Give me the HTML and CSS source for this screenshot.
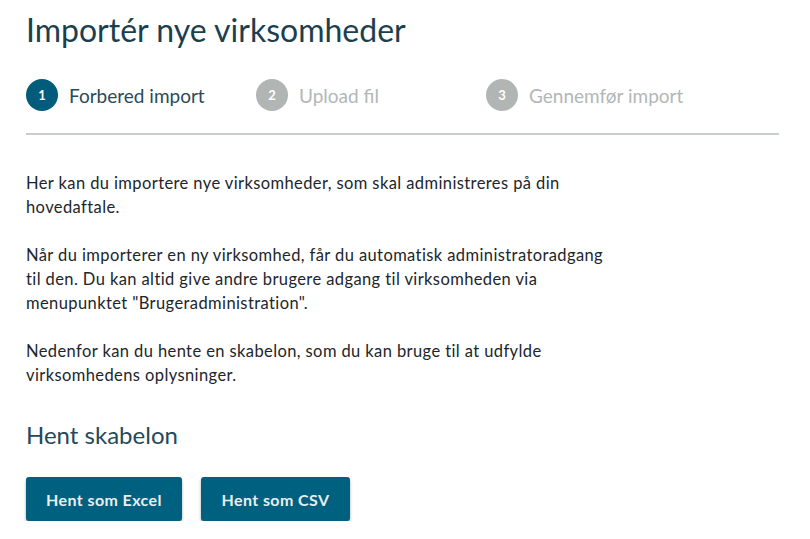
FILE: index.html
```html
<!DOCTYPE html>
<html lang="da">
<head>
<meta charset="utf-8">
<title>Importér nye virksomheder</title>
<link rel="stylesheet" href="styles.css">
</head>
<body>
<main class="page">
  <h1 class="title">Importér nye virksomheder</h1>
  <ol class="steps">
    <li class="step active"><span class="num">1</span><span class="label">Forbered import</span></li>
    <li class="step"><span class="num">2</span><span class="label">Upload fil</span></li>
    <li class="step"><span class="num">3</span><span class="label">Gennemfør import</span></li>
  </ol>
  <section class="content">
    <p>Her kan du importere nye virksomheder, som skal administreres på din<br>hovedaftale.</p>
    <p>Når du importerer en ny virksomhed, får du automatisk administratoradgang<br>til den. Du kan altid give andre brugere adgang til virksomheden via<br>menupunktet "Brugeradministration".</p>
    <p>Nedenfor kan du hente en skabelon, som du kan bruge til at udfylde<br>virksomhedens oplysninger.</p>
    <h2 class="subtitle">Hent skabelon</h2>
    <div class="buttons">
      <button class="btn excel">Hent som Excel</button>
      <button class="btn csv">Hent som CSV</button>
    </div>
  </section>
</main>
</body>
</html>
```
FILE: styles.css
```css
* { box-sizing: border-box; }
html, body { margin: 0; padding: 0; background: #fff; }
body { font-family: Lato, "Open Sans", sans-serif; color: #1f2d33; }
.page { padding: 10px 31px 0 26px; }
.title {
  margin: 0;
  font-size: 32px;
  font-weight: 400;
  line-height: 40px;
  color: #1c3f4f;
}
.steps {
  list-style: none;
  margin: 0;
  padding: 29px 0 22px;
  display: flex;
  border-bottom: 2px solid #c8cdcd;
}
.step {
  width: 230px;
  display: flex;
  align-items: center;
  gap: 11px;
}
.num {
  width: 32px; height: 32px;
  border-radius: 50%;
  background: #b1b6b5;
  color: #fff;
  font-size: 13px;
  font-weight: 700;
  display: flex; align-items: center; justify-content: center;
}
.label { font-size: 19px; color: #b2b7b7; }
.step.active .num { background: #005c7a; }
.step.active .label { color: #2b4a57; }
.content { padding-top: 36px; }
.content p {
  margin: 0 0 24px;
  font-size: 16.5px;
  letter-spacing: 0.4px;
  line-height: 24px;
  color: #1c262b;
}
.subtitle {
  margin: 33px 0 0;
  font-size: 24px;
  font-weight: 400;
  line-height: 30px;
  color: #24495a;
}
.buttons { display: flex; gap: 19px; margin-top: 27px; }
.btn {
  height: 44px;
  padding: 0;
  border: 0;
  border-radius: 3px;
  background: #00607f;
  color: #e9eef0;
  font-family: Lato, sans-serif;
  font-size: 16px;
  letter-spacing: 0.4px;
  font-weight: 700;
  box-shadow: 0 2px 3px rgba(0,0,0,0.35);
}
.btn.excel { width: 156px; }
.btn.csv { width: 149px; }
```
